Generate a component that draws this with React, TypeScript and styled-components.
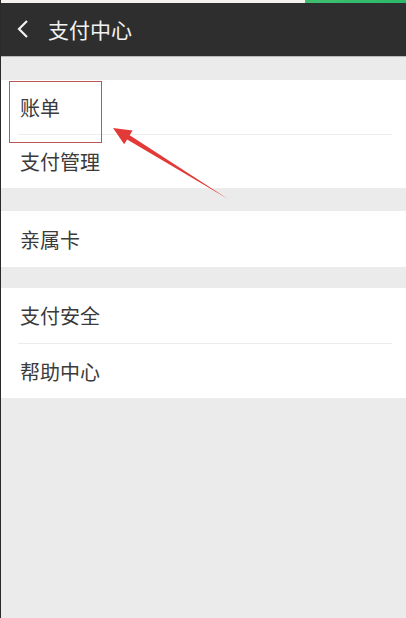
import styled, { createGlobalStyle } from "styled-components";

const GlobalStyle = createGlobalStyle`
  html, body {
    margin: 0;
    padding: 0;
    background: #ebebeb;
  }
  body {
    font-family: "Noto Sans CJK SC", "Noto Sans", sans-serif;
  }
`;

const Screen = styled.div`
  position: relative;
  width: 406px;
  height: 618px;
  overflow: hidden;
  background: #ebebeb;
  border-left: 1px solid #2a2a2a;
  box-sizing: border-box;
`;

const StatusStrip = styled.div`
  display: flex;
  height: 3px;
  background: #f4f1ee;
`;

const StatusGreen = styled.div`
  margin-left: auto;
  width: 101px;
  background: linear-gradient(90deg, #3fbf6f, #2bb86a);
`;

const Header = styled.div`
  display: flex;
  align-items: center;
  height: 53px;
  padding-left: 15px;
  background: #2e2e2e;
  border-bottom: 1px solid #b8b8b8;
  color: #f2f2f2;
`;

const BackIcon = styled.svg`
  width: 14px;
  height: 20px;
  margin-top: -2px;
`;

const Title = styled.div`
  margin-left: 18px;
  margin-top: -2px;
  font-size: 21px;
`;

const Group = styled.div<{ $top: number }>`
  margin-top: ${({ $top }) => $top}px;
  background: #ffffff;
`;

const Item = styled.div<{ $h: number }>`
  display: flex;
  align-items: center;
  height: ${({ $h }) => $h}px;
  padding-left: 19px;
  font-size: 20px;
  color: #3b3b3b;
`;

const Divider = styled.div`
  height: 1px;
  margin: 0 14px 0 17px;
  background: #ededed;
`;

const HighlightBox = styled.div`
  position: absolute;
  left: 8px;
  top: 81px;
  width: 91px;
  height: 60px;
  border: 1px solid #b55a5a;
`;

const Arrow = styled.svg`
  position: absolute;
  left: 0;
  top: 0;
  width: 406px;
  height: 618px;
  pointer-events: none;
`;

export default function App() {
  return (
    <>
      <GlobalStyle />
      <Screen>
        <StatusStrip>
          <StatusGreen />
        </StatusStrip>
        <Header>
          <BackIcon viewBox="0 0 14 20">
            <path d="M11 2 L3 10 L11 18" fill="none" stroke="#f2f2f2" strokeWidth="2.2" />
          </BackIcon>
          <Title>支付中心</Title>
        </Header>

        <Group $top={23}>
          <Item $h={54}>账单</Item>
          <Divider />
          <Item $h={53}>支付管理</Item>
        </Group>

        <Group $top={23}>
          <Item $h={56}>亲属卡</Item>
        </Group>

        <Group $top={21}>
          <Item $h={55}>支付安全</Item>
          <Divider />
          <Item $h={54}>帮助中心</Item>
        </Group>

        <HighlightBox />
        <Arrow viewBox="0 0 406 618">
          <path
            d="M227 199 L128.7 135.3 L131.6 130.6 L112 128 L123.2 144.2 L126.1 139.5 Z"
            fill="#e23a36"
          />
        </Arrow>
      </Screen>
    </>
  );
}
